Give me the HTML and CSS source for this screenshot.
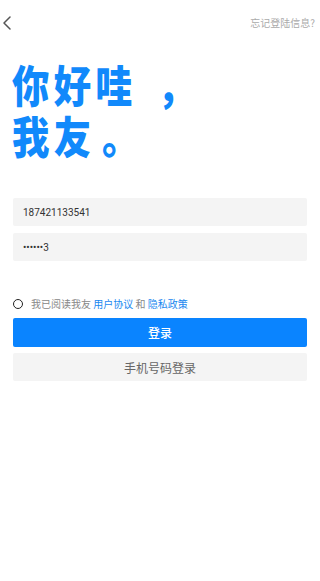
FILE: index.html
```html
<!DOCTYPE html>
<html lang="zh">
<head>
<meta charset="utf-8">
<link rel="stylesheet" href="styles.css">
</head>
<body>
<div class="page">
  <div class="topbar">
    <svg class="back" width="10" height="14" viewBox="0 0 10 14"><path d="M8 1 L2 7 L8 13" fill="none" stroke="#555" stroke-width="1.5" stroke-linecap="round" stroke-linejoin="round"/></svg>
    <span class="forgot">忘记登陆信息?</span>
  </div>
  <h1 class="hello">你好哇<span class="comma">，</span><br>我友<span class="stop">。</span></h1>
  <div class="form">
    <div class="field">187421133541</div>
    <div class="field">••••••3</div>
  </div>
  <div class="agree">
    <span class="radio"></span>
    <span class="agree-text">我已阅读我友 <a class="link">用户协议</a> 和 <a class="link">隐私政策</a></span>
  </div>
  <div class="btn primary">登录</div>
  <div class="btn secondary">手机号码登录</div>
</div>
</body>
</html>
```
FILE: styles.css
```css
* { box-sizing: border-box; }
html, body { margin: 0; padding: 0; background: #fff; }
body { font-family: "Noto Sans CJK SC", "Noto Sans", sans-serif; }
.page { width: 320px; min-height: 581px; }
.topbar { height: 44px; display: flex; align-items: center; justify-content: space-between; padding: 0 5px 0 2px; }
.back { display: block; margin-top: 1px; }
.forgot { font-size: 10px; color: #aaa; line-height: 14px; margin-top: 2px; }
.hello { margin: 15px 0 0 12px; font-size: 44px; line-height: 51px; font-weight: 900; color: #1189fb; letter-spacing: 5px; transform: scaleX(0.85); transform-origin: left top; white-space: nowrap; }
.comma { margin-left: 24px; }
.stop { margin-left: 8px; }
.form { margin: 37px 13px 0; display: flex; flex-direction: column; gap: 7px; }
.field { height: 28px; background: #f4f4f4; border-radius: 2px; padding: 0 10px; display: flex; align-items: center; font-size: 10px; color: #333; font-family: Roboto, "Noto Sans CJK SC", sans-serif; }
.agree { margin: 36px 13px 0; display: flex; align-items: center; height: 14px; }
.radio { width: 10px; height: 10px; border: 1.7px solid #222; border-radius: 50%; flex: none; }
.agree-text { margin-left: 8px; font-size: 10px; color: #888; line-height: 14px; }
.link { color: #1a88f0; text-decoration: none; }
.btn { margin: 0 13px; height: 29px; display: flex; align-items: center; justify-content: center; font-size: 12px; border-radius: 2px; }
.primary { margin-top: 7px; background: #0a84ff; color: #fff; font-weight: 500; }
.secondary { margin-top: 6px; background: #f4f4f4; color: #666; height: 28px; }
```
